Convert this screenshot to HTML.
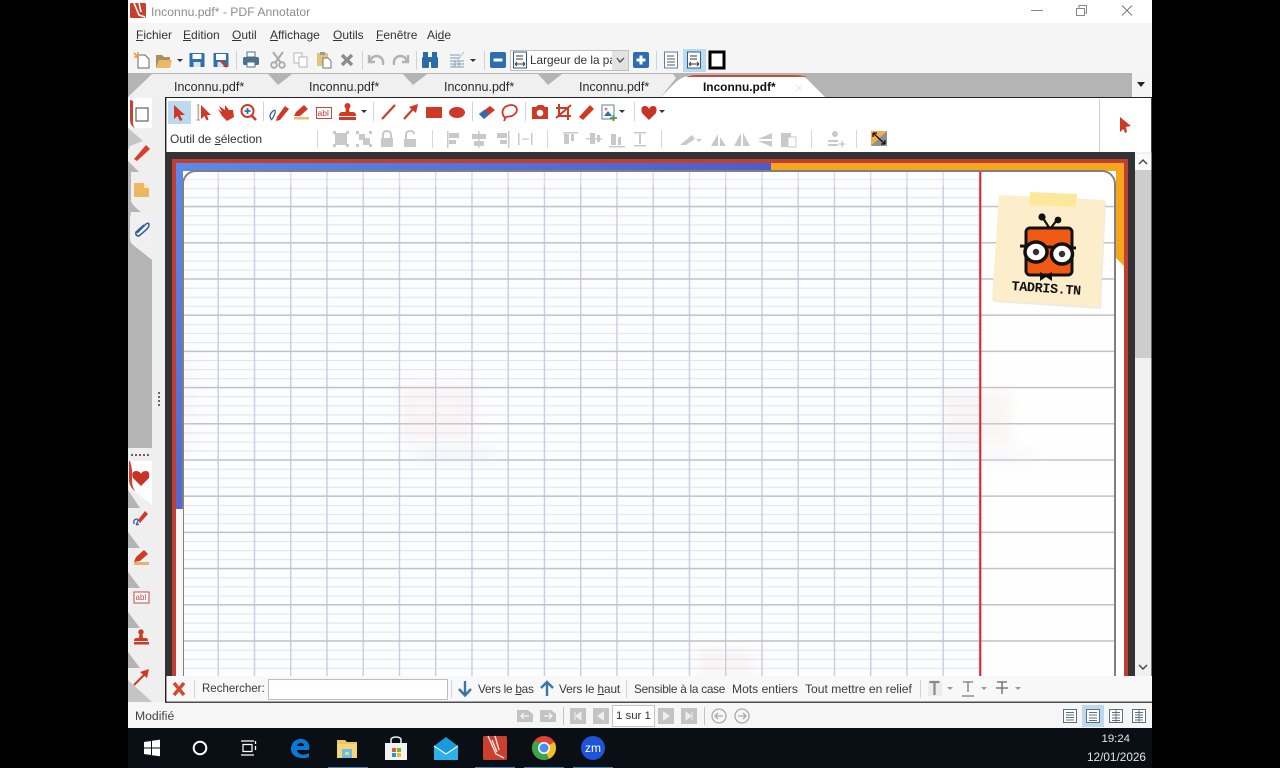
<!DOCTYPE html>
<html><head><meta charset="utf-8"><title>PDF Annotator</title>
<style>
html,body{margin:0;padding:0;background:#000;width:1280px;height:768px;overflow:hidden}
#a{position:absolute;left:0;top:0;width:1280px;height:768px;overflow:hidden;background:#000}
svg.l{position:absolute;left:0;top:0;filter:blur(.3px)}
.t{position:absolute;font:12.2px/16px "Liberation Sans",sans-serif;color:#333;white-space:nowrap}
.m{top:27px;font-size:12px}
.tb{top:79px;font-size:12.5px;color:#2a2a2a}
.f{top:681px;color:#3a3a3a;font-size:12.1px}
u{text-underline-offset:1px}
</style></head><body><div id="a">
<svg class="l" width="1280" height="768" viewBox="0 0 1280 768" xmlns="http://www.w3.org/2000/svg">
<defs>
<pattern id="minor" x="0" y="170" width="36.25" height="9.05" patternUnits="userSpaceOnUse"><rect y="0" width="36.25" height="1.1" fill="#e3e4ec"/></pattern>
<pattern id="major" x="0" y="169.6" width="36.25" height="36.2" patternUnits="userSpaceOnUse"><rect y="0" width="36.25" height="1.5" fill="#c2c2c8"/></pattern>
<pattern id="vert" x="217.5" y="0" width="36.25" height="36" patternUnits="userSpaceOnUse"><rect width="1.4" height="36" fill="#c9cbe4"/></pattern>
<linearGradient id="bt" x1="0" x2="1" y1="0" y2="0"><stop offset="0" stop-color="#5b8ae8"/><stop offset="1" stop-color="#4f5cc8"/></linearGradient>
<linearGradient id="bl" x1="0" x2="0" y1="0" y2="1"><stop offset="0" stop-color="#5b8ae8"/><stop offset="1" stop-color="#5566cc"/></linearGradient>
<filter id="b6"><feGaussianBlur stdDeviation="6"/></filter>
<clipPath id="pc"><rect x="184" y="172" width="930" height="510" rx="13"/></clipPath>
</defs>

<!-- app chrome -->
<rect x="128" y="0" width="1024" height="23" fill="#fff"/>
<rect x="128" y="23" width="1024" height="50" fill="#f5f5f5"/>
<rect x="128" y="73" width="1024" height="25" fill="#b4b4b4"/>
<rect x="152" y="98" width="13" height="604" fill="#efefef"/>
<rect x="128" y="98" width="24" height="350" fill="#b4b4b4"/>
<rect x="128" y="448" width="24" height="254" fill="#efefef"/>
<rect x="128" y="702" width="1024" height="26" fill="#f6f6f6"/>
<rect x="128" y="728" width="1024" height="40" fill="#0a0f16"/>

<!-- tabs -->
<path d="M128 97V98H1132V73H150Z" fill="#b4b4b4"/>
<path d="M128 98V97L152 74H268L278 85L292 74H403L413 85L427 74H538L548 85L562 74H673L676 78 660 98Z" fill="#f0f0f0"/>
<path d="M660 98L676 82Q684 75 694 75H796Q804 75 810 82L826 98Z" fill="#fff"/>
<path d="M686 77Q690 75 696 75H794Q802 75 807 77Z" fill="#cc4b37"/>
<rect x="1132" y="73" width="20" height="24" fill="#f4f4f4"/>
<path d="M1137 82H1145L1141 87Z" fill="#222"/>
<path d="M796 85L802 91M802 85L796 91" stroke="#e8e8e8" stroke-width="1"/>
<rect x="165" y="97" width="987" height="1.6" fill="#222"/>

<!-- tool panel -->
<rect x="165" y="98" width="987" height="54" fill="#fff"/>
<rect x="165" y="98" width="1.4" height="56" fill="#222"/>
<rect x="1099" y="99" width="1" height="53" fill="#cfcfcf"/>
<rect x="1151" y="98" width="1" height="54" fill="#444"/>
<rect x="168" y="101" width="23" height="23" fill="#bcd9f0"/>

<!-- document -->
<rect x="165" y="152" width="970" height="524" fill="#333336"/>
<rect x="172" y="159" width="956" height="530" fill="#c23f2f"/>
<rect x="176" y="163" width="948" height="520" fill="#fff"/>
<rect x="176" y="163" width="595" height="8" fill="url(#bt)"/>
<rect x="771" y="163" width="353" height="8" fill="#f5a61d"/>
<path d="M1116 170H1124V266L1116 258Z" fill="#f5a61d"/>
<rect x="176" y="163" width="7" height="346" fill="url(#bl)"/>
<rect x="182" y="170" width="934" height="520" rx="14" fill="#808081"/>
<rect x="184" y="172" width="930" height="520" rx="12" fill="#fefefe"/>
<g clip-path="url(#pc)">
<rect x="184" y="172" width="796" height="510" fill="#fcfdff"/>
<rect x="184" y="172" width="796" height="510" fill="url(#minor)"/>
<rect x="184" y="172" width="796" height="510" fill="url(#vert)"/>
<rect x="184" y="200" width="930" height="480" fill="url(#major)"/>
<rect x="980" y="172" width="134" height="30" fill="#fff"/>
<rect x="184" y="172" width="796" height="14" fill="#fff" opacity=".3"/>
<!-- watermarks -->
<g filter="url(#b6)" opacity=".2">
<rect x="402" y="385" width="72" height="55" fill="#f3d4cf"/>
<rect x="412" y="445" width="85" height="20" fill="#e5e5ea"/>
<rect x="942" y="390" width="70" height="55" fill="#ecd8d3"/>
<rect x="955" y="450" width="80" height="16" fill="#e9e9ee"/>
<rect x="698" y="650" width="55" height="30" fill="#f3d4cf"/>
<rect x="184" y="350" width="10" height="100" fill="#f2dcdc"/>
</g>
</g>
<rect x="979.3" y="172" width="2" height="504" fill="#d8262e"/>
<rect x="176" y="509" width="7" height="170" fill="#f7f7f4"/>

<!-- sticky note -->
<path d="M999 195L1105 200 1100 308 992 301Z" fill="#e4dccb" transform="translate(1 1)" opacity=".6"/>
<path d="M999 195L1105 200 1100 307 992 300Z" fill="#fdeecb"/>
<path d="M1030 192L1077 194 1076 207 1029 205Z" fill="#fbe89a"/>
<g stroke="#111" fill="none" stroke-width="2.2"><path d="M1050 229L1043 218M1050 229L1057 220"/></g>
<circle cx="1042" cy="217" r="3.6" fill="#111"/><circle cx="1058" cy="220" r="3.4" fill="#111"/>
<rect x="1026" y="228" width="46" height="47" rx="4" fill="#f05a12" stroke="#111" stroke-width="3"/>
<path d="M1020 246L1076 248" stroke="#111" stroke-width="3"/>
<ellipse cx="1036" cy="252" rx="11" ry="10" fill="#fff" stroke="#111" stroke-width="3.5"/>
<ellipse cx="1062" cy="254" rx="10.5" ry="10" fill="#fff" stroke="#111" stroke-width="3.5"/>
<circle cx="1036" cy="252" r="3.2" fill="#333"/><circle cx="1062" cy="254" r="3.2" fill="#333"/>
<path d="M1040 272L1046 275 1052 272 1052 281 1046 277 1040 281Z" fill="#111"/>

<!-- scrollbar -->
<rect x="1135" y="152" width="16.5" height="524" fill="#f0f0f0"/>
<rect x="1135" y="154" width="16.5" height="16" fill="#fafafa"/>
<rect x="1135" y="170" width="16.5" height="188" fill="#cdcdcd"/>
<path d="M1139 164L1143 160 1147 164M1139 665L1143 669 1147 665" fill="none" stroke="#444" stroke-width="1.4"/>

<!-- find bar -->
<rect x="165" y="676" width="987" height="26" fill="#f8f8f8"/>
<rect x="165" y="676" width="1.4" height="26" fill="#222"/>
<rect x="165" y="701.6" width="987" height="1.2" fill="#222"/>
<rect x="268.500" y="679.500" width="179" height="20" fill="#fff" stroke="#bcbcbc"/>
<g fill="#d4d4d4"><rect x="194" y="680" width="1" height="18"/><rect x="451" y="680" width="1" height="18"/><rect x="626" y="680" width="1" height="18"/><rect x="920" y="680" width="1" height="18"/></g>
<path d="M174 683L184 695M184 683L174 695" stroke="#d2492f" stroke-width="3.4"/>
<path d="M465 681V695M459 689L465 695.500 471 689" fill="none" stroke="#3b74ad" stroke-width="2.4"/>
<path d="M547 696V682M541 688L547 682 553 688" fill="none" stroke="#3b74ad" stroke-width="2.4"/>
<rect x="928" y="681" width="14" height="15" fill="#ececec"/>
<path d="M929.500 682H939.500M934.500 682V695" stroke="#888" stroke-width="2.2" fill="none"/>
<path d="M963 682H973M968 682V692M962 696H974" stroke="#777" stroke-width="1.3" fill="none"/>
<path d="M997 682H1007M1002 682V694M996 688H1008" stroke="#666" stroke-width="1.3" fill="none"/>
<g fill="#999"><path d="M947 687H953L950 690Z"/><path d="M981 687H987L984 690Z"/><path d="M1015 687H1021L1018 690Z"/></g>

<!-- left sidebar tabs -->
<path d="M128 128H152V172H128Z" fill="#efefef"/>
<path d="M128 128L143 141 130 146 128 150Z" fill="#c4c4c4"/>
<path d="M128 98H152V128H128Z" fill="#fff"/>
<path d="M128 161L139 172H128Z" fill="#b4b4b4"/>
<path d="M130 172H152V212L141 212Q131 205 130 198Z" fill="#efefef"/>
<path d="M128 172H131V200L128 200Z" fill="#b4b4b4"/>
<path d="M131 212H152V260L132 244Q130 242 130 238V218Z" fill="#f0f0f0"/>
<path d="M130 100Q134 100 133 104V122Q133 126 135 128 130 126 130 120Z" fill="#c9442f"/>
<rect x="136" y="108" width="12" height="13" fill="#fff" stroke="#555" stroke-width="1.100"/>
<path d="M134 159L146 145 150 149 137 161Z" fill="#d8402c"/>
<path d="M134 183H144L149 188V197H134Z" fill="#eeb660"/>
<path d="M144 183L149 188H144Z" fill="#f9e9a8"/>
<path d="M137 233L146 224Q149 222 149 225 149 227 146 230L139 236Q135 236 136 232L144 225" fill="none" stroke="#2f5f9d" stroke-width="1.500"/>
<g fill="#666"><rect x="131" y="454" width="2" height="2"/><rect x="135" y="454" width="2" height="2"/><rect x="139" y="454" width="2" height="2"/><rect x="143" y="454" width="2" height="2"/><rect x="147" y="454" width="2" height="2"/></g>
<g fill="#666"><rect x="158" y="392" width="2" height="2"/><rect x="158" y="396" width="2" height="2"/><rect x="158" y="400" width="2" height="2"/><rect x="158" y="404" width="2" height="2"/></g>
<path d="M129 461H152V505L138 494 130 490Z" fill="#fff"/>
<path d="M130 461Q133 470 132 480 132 488 136 492 130 488 129 481V461Z" fill="#c9442f"/>
<path d="M141 486L133 478Q131 471 136 471 140 471 141 474 142 471 146 471 150 471 149 478Z" fill="#c93226"/>
<g fill="#b4b4b4">
<path d="M128 490L140 508H128Z"/><path d="M128 532L140 548H128Z"/><path d="M128 572L140 588H128Z"/><path d="M128 612L140 628H128Z"/><path d="M128 652L140 668H128Z"/><path d="M128 680L152 702H128Z" fill="#c4c4c4"/>
</g>
<g transform="translate(141,517)"><path d="M-7 7Q-8 2-4 2-2 3-4 6-6 9-2 7" fill="none" stroke="#3d5fa8" stroke-width="1.300"/><path d="M-3 3L4-6 7-3-1 6Z" fill="#cf3a27"/></g>
<g transform="translate(141,557)"><rect x="-7" y="5" width="15" height="3" fill="#dcb86a"/><path d="M-7 5L-5 0 3-7 7-3-1 4Z" fill="#cf3a27"/></g>
<g transform="translate(141,597)"><rect x="-7" y="-5" width="15" height="11" fill="#fff" stroke="#c84a3a"/><text x="-5.500" y="3" font-family="Liberation Sans,sans-serif" font-size="8" fill="#b44">abl</text></g>
<g transform="translate(141,638)" fill="#cf3a27"><circle cy="-6" r="2.700"/><path d="M-1.500-4H1.500L2 0H5Q7 0 7 3H-7Q-7 0-5 0H-2Z"/><rect x="-7" y="4" width="15" height="2.500"/></g>
<g transform="translate(141,677)"><path d="M-7 8L5-4" stroke="#cf3a27" stroke-width="2"/><path d="M8-8L6 1 -1-5Z" fill="#cf3a27"/></g>

<!-- title bar icons -->
<rect x="130" y="3" width="16" height="15" rx="1.500" fill="#c8402d"/>
<path d="M134 3L139 15 145 17M139 3L141 12" stroke="#fff" stroke-width="1.600" fill="none"/>
<path d="M1031 10.500H1043" stroke="#888" stroke-width="1"/>
<path d="M1076.500 8.500H1084.500V15.500H1076.500ZM1079 8.500V5.500H1086.500V13H1084.500" fill="none" stroke="#888" stroke-width="1"/>
<path d="M1122 5.500L1132 15.500M1132 5.500L1122 15.500" stroke="#777" stroke-width="1"/>

<!-- toolbar 1 -->
<g fill="#d2d2d2"><rect x="236" y="51" width="1" height="19"/><rect x="362" y="51" width="1" height="19"/><rect x="416" y="51" width="1" height="19"/><rect x="484" y="51" width="1" height="19"/><rect x="656" y="51" width="1" height="19"/></g>
<g transform="translate(142,60)"><path d="M-4-5H3L7-1V8H-4Z" fill="#fff" stroke="#666"/><path d="M-8-7L-4-3M-4-8V-3M-8-3H-3" stroke="#e8a040" stroke-width="1.600"/></g>
<g transform="translate(164,61)"><path d="M-8-6H-2L0-4H6V-1H-4L-8 7Z" fill="#a8905f"/><path d="M-8 7L-5-1H8L6 7Z" fill="#eab866"/></g>
<path d="M177 59H183L180 62Z" fill="#333"/>
<g transform="translate(197,60)"><rect x="-7.500" y="-7" width="15" height="14" rx="1" fill="#2f6fad"/><rect x="-4.500" y="-6" width="9" height="5" fill="#fff"/><rect x="-3.500" y="2" width="7" height="5" fill="#d8e6f3"/></g>
<g transform="translate(221,60)"><rect x="-7.500" y="-7" width="15" height="14" rx="1" fill="#2f6fad"/><rect x="-5" y="-6" width="10" height="6" fill="#fff"/><rect x="-3.500" y="2" width="6" height="5" fill="#d8e6f3"/><path d="M0 1L6 7" stroke="#cf3a27" stroke-width="2.600"/></g>
<g transform="translate(251,60)"><rect x="-4" y="-8" width="8" height="5" fill="#fff" stroke="#4d7090"/><rect x="-8" y="-3" width="16" height="8" rx="1.500" fill="#4d7090"/><rect x="-4" y="2" width="8" height="5" fill="#fff" stroke="#4d7090"/></g>
<g transform="translate(278,60)" stroke="#aaa" fill="none"><path d="M-5-8L3 3M5-8L-3 3" stroke-width="2"/><circle cx="-4" cy="5" r="2.800" stroke-width="1.800"/><circle cx="4" cy="5" r="2.800" stroke-width="1.800"/></g>
<g transform="translate(301,60)" fill="#fff" stroke="#b5b5b5"><rect x="-7" y="-7" width="8" height="10"/><rect x="-2" y="-3" width="8" height="10"/></g>
<g transform="translate(324,60)"><rect x="-7" y="-7" width="11" height="13" fill="#e6c27c"/><rect x="-4" y="-8" width="5" height="3" fill="#999"/><path d="M-1-2H4L7 1V8H-1Z" fill="#fff" stroke="#777"/></g>
<path d="M342 55L352 65M352 55L342 65" stroke="#8c8c8c" stroke-width="3.400"/>
<path d="M370 62Q371 56 377 56 384 57 383 65M369 55V62H375" fill="none" stroke="#b3b3b3" stroke-width="2.400"/>
<path d="M407 62Q406 56 400 56 393 57 394 65M408 55V62H402" fill="none" stroke="#b3b3b3" stroke-width="2.400"/>
<g transform="translate(430,60)" fill="#2f6aa8"><rect x="-8" y="-3" width="7" height="11" rx="1"/><rect x="1" y="-3" width="7" height="11" rx="1"/><rect x="-7" y="-8" width="5" height="6"/><rect x="2" y="-8" width="5" height="6"/><rect x="-1.500" y="-3" width="3" height="5"/></g>
<g transform="translate(457,60)" stroke="#7d9abb" fill="none" stroke-width=".9"><path d="M-7-5H3M-7-2H3M-7 1H7M-7 4H7M-7 7H7M-2 1V7M2 1V7"/><path d="M-6 8L7-8" stroke="#bbb"/></g>
<path d="M470 59H476L473 62Z" fill="#333"/>
<rect x="490" y="52" width="16" height="16" rx="2" fill="#2e6db0"/><rect x="493.500" y="58.500" width="9" height="3" fill="#fff"/>
<rect x="510.500" y="50.500" width="118" height="20" fill="#fff" stroke="#c0c0c0"/>
<rect x="612" y="51" width="16" height="19" fill="#e2e2e2"/>
<path d="M617 58L620 62 624 58" fill="none" stroke="#555" stroke-width="1.400"/>
<g transform="translate(520,60)"><rect x="-6.500" y="-8" width="13" height="16" fill="#fff" stroke="#2a5d8f"/><path d="M-4-4H3M-4-1H3M-5 4H5M-5 4L-3 2M-5 4L-3 6M5 4L3 2M5 4L3 6" stroke="#333" stroke-width=".9" fill="none"/></g>
<rect x="633" y="52" width="16" height="16" rx="2" fill="#2e6db0"/><path d="M636.500 60H645.500M641 55.500V64.500" stroke="#fff" stroke-width="3"/>
<g transform="translate(671,60)"><rect x="-6.500" y="-8" width="13" height="16" fill="#fff" stroke="#5e7f9e"/><path d="M-4-4H3M-4-1H4M-4 2H4M-4 5H4" stroke="#555" stroke-width=".9"/></g>
<rect x="683" y="49" width="23" height="23" fill="#bcd9f0"/>
<g transform="translate(694,60)"><rect x="-6.500" y="-8" width="13" height="16" fill="#fff" stroke="#2a5d8f"/><path d="M-4-4H3M-4-1H3M-5 4H5M-5 4L-3 2M-5 4L-3 6M5 4L3 2M5 4L3 6" stroke="#333" stroke-width=".9" fill="none"/></g>
<rect x="710" y="52" width="14" height="16" fill="#fff" stroke="#000" stroke-width="3"/>

<!-- toolbar 2 -->
<g fill="#d2d2d2"><rect x="263" y="102" width="1" height="19"/><rect x="373" y="102" width="1" height="19"/><rect x="472" y="102" width="1" height="19"/><rect x="525" y="102" width="1" height="19"/><rect x="634" y="102" width="1" height="19"/></g>
<g fill="#cf3a27">
<path d="M174 105L174 119 177.500 116 180 121 182.500 120 180 115 185 115Z"/>
<path d="M201 105L201 119 204.500 116 206.500 120.500 208.500 119.500 207 115 211 115Z"/>
<path d="M218 109L222 112 219 106 225 110 225 105 229 110 233 110 234 117 227 121 222 116Z"/>
<path d="M277 117L285 106 289 109 280 120 276 121Z"/>
<path d="M294 116L296 112 304 105 308 109 300 116Z"/>
<circle cx="347.500" cy="106" r="3"/><path d="M346 107H349L349.500 112H353Q356 112 356 116H339Q339 112 342 112H345.500Z"/><rect x="339" y="117" width="17" height="3"/>
</g>
<path d="M197 105H199.500M198.200 105V120M196.500 120H200" stroke="#cc7a85" stroke-width="1.100" fill="none"/>
<circle cx="247.500" cy="111" r="6" fill="#fff" stroke="#cf3a27" stroke-width="2"/>
<path d="M252 116L256 120" stroke="#cf3a27" stroke-width="2.600"/>
<path d="M244.500 111H250.500M247.500 108V114" stroke="#2e6db0" stroke-width="1.800"/>
<path d="M272 120Q268 116 272 112 276 108 275 113 274 117 271 120" fill="none" stroke="#3d5fa8" stroke-width="1.300"/>
<rect x="294" y="117" width="15" height="2.500" fill="#e0c27c"/>
<rect x="316.500" y="107.500" width="15" height="11" fill="#fff" stroke="#c84a3a"/>
<text x="317.500" y="116" font-family="Liberation Sans,sans-serif" font-size="8.500" fill="#b33">abl</text>
<path d="M361 110H367L364 113Z" fill="#333"/>
<path d="M382 119L395 105" stroke="#cf3a27" stroke-width="2.200"/>
<path d="M404 119L414 108" stroke="#cf3a27" stroke-width="2.200"/><path d="M418 104L416 113 409 107Z" fill="#cf3a27"/>
<rect x="426" y="107" width="16" height="11" fill="#cf3a27"/>
<ellipse cx="457" cy="112.500" rx="8" ry="5.500" fill="#cf3a27"/>
<path d="M479 114L490 106 495 110 484 119Z" fill="#cf3a27"/><path d="M479 114L484 110 489 114 484 119Z" fill="#2e6db0"/>
<path d="M505 118Q500 112 505 107 512 103 516 107 519 112 512 116L506 117 504 121" fill="none" stroke="#cf3a27" stroke-width="1.800"/>
<path d="M532 107H536L538 105H543L545 107H548V119H532Z" fill="#cf3a27"/><circle cx="540" cy="113" r="3.300" fill="#fff"/>
<path d="M556 108H568V120M559 104V116H571M556 118L571 105" fill="none" stroke="#cf3a27" stroke-width="2"/>
<path d="M579 117L590 105 594 109 583 120Z" fill="#cf3a27"/>
<rect x="602" y="105" width="12" height="14" fill="#fff" stroke="#5e7f9e"/><circle cx="606" cy="109" r="1.500" fill="#d88"/><path d="M604 116L608 111 612 116Z" fill="#2e6db0"/><path d="M610 118H617M613.500 115V121" stroke="#4a9a4a" stroke-width="1.800"/>
<path d="M619 110H625L622 113Z" fill="#333"/>
<path d="M649 120L642 113Q640 106 645 106 648 106 649 109 650 106 653 106 658 106 656 113Z" fill="#c93226"/>
<path d="M659 110H665L662 113Z" fill="#333"/>
<path d="M1120 117L1120 132 1123.500 129 1125 133 1127 132 1126 127 1131 126Z" fill="#cf3a27"/>

<!-- toolbar 3 gray icons -->
<g fill="#d8d8d8"><rect x="317" y="130" width="1" height="18"/><rect x="432" y="130" width="1" height="18"/><rect x="547" y="130" width="1" height="18"/><rect x="661" y="130" width="1" height="18"/><rect x="811" y="130" width="1" height="18"/><rect x="856" y="130" width="1" height="18"/></g>
<g fill="#c9c9c9">
<rect x="335" y="133" width="12" height="12"/><rect x="333" y="131" width="3" height="3"/><rect x="346" y="131" width="3" height="3"/><rect x="333" y="144" width="3" height="3"/><rect x="346" y="144" width="3" height="3"/>
<rect x="359" y="134" width="6" height="6"/><rect x="363" y="138" width="7" height="7"/><rect x="356" y="131" width="3" height="3"/><rect x="369" y="144" width="3" height="3"/><rect x="369" y="131" width="3" height="3"/><rect x="356" y="144" width="3" height="3"/>
<rect x="381" y="138" width="12" height="9"/><rect x="404" y="139" width="12" height="8"/>
<rect x="449" y="133" width="10" height="5"/><rect x="449" y="140" width="7" height="4"/><rect x="447" y="131" width="1.500" height="17"/>
<rect x="472" y="134" width="14" height="5"/><rect x="474" y="141" width="10" height="5"/><rect x="478" y="131" width="1.500" height="17"/>
<rect x="497" y="133" width="10" height="5"/><rect x="500" y="140" width="7" height="4"/><rect x="508" y="131" width="1.500" height="17"/>
<rect x="518" y="133" width="1.500" height="12"/><rect x="531" y="133" width="1.500" height="12"/><rect x="522" y="138.500" width="7" height="1.200"/>
<rect x="563" y="132" width="15" height="1.500"/><rect x="564" y="134" width="5" height="10"/><rect x="571" y="134" width="3" height="7"/>
<rect x="586" y="138" width="16" height="1.500"/><rect x="590" y="133" width="5" height="11"/><rect x="597" y="135" width="3" height="7"/>
<rect x="609" y="146" width="16" height="1.500"/><rect x="611" y="134" width="5" height="11"/><rect x="618" y="137" width="3" height="8"/>
<rect x="634" y="132" width="12" height="1.500"/><rect x="634" y="145" width="12" height="1.500"/><rect x="639" y="134" width="2" height="10"/>
<path d="M680 145L692 135 695 139 686 145Z"/><path d="M696 139H702L699 142Z"/>
<path d="M711 146L718 134V146ZM720 137V146H726Z"/>
<path d="M734 146L741 133V146ZM743 133L750 146H743Z"/>
<path d="M772 133V139L758 139ZM772 141V147L758 141Z"/>
<rect x="781" y="133" width="10" height="14"/>
<circle cx="835" cy="134" r="3"/><rect x="828" y="140" width="10" height="2"/><rect x="828" y="144" width="10" height="2"/>
</g>
<path d="M383 138V135Q383 131 387 131 391 131 391 135V138" fill="none" stroke="#c9c9c9" stroke-width="2"/>
<path d="M406 139V135Q406 131 410 131 414 131 414 134" fill="none" stroke="#c9c9c9" stroke-width="2"/>
<rect x="788" y="137" width="8" height="10" fill="#fff" stroke="#c9c9c9"/>
<path d="M839 144H845M842 141V147" stroke="#c9c9c9" stroke-width="1.500"/>
<rect x="871" y="131" width="16" height="15" fill="#8f8f8f"/><path d="M871 131H887L871 146Z" fill="#eeb04e"/>
<path d="M873 133L885 144M873 133V137M873 133H877M885 144V140M885 144H881" fill="none" stroke="#111" stroke-width="1.300"/>

<!-- status bar -->
<g fill="#c3c3c3">
<path d="M517 710H528L533 714V722H517Z"/><path d="M540 710H551L556 714V722H540Z"/>
<rect x="570" y="708" width="16" height="16"/><rect x="593" y="708" width="16" height="16"/>
<rect x="658" y="708" width="16" height="16"/><rect x="681" y="708" width="16" height="16"/>
<rect x="563" y="707" width="1" height="18"/><rect x="704" y="707" width="1" height="18"/>
</g>
<path d="M521 716H529M524 713L521 716 524 719M544 716H552M549 713L552 716 549 719" fill="none" stroke="#f6f6f6" stroke-width="1.200"/>
<path d="M581 712V720L576 716ZM575 712V720" fill="#eee" stroke="#eee"/>
<path d="M604 711V721L597 716Z" fill="#eee"/>
<path d="M663 711V721L670 716Z" fill="#eee"/>
<path d="M686 712V720L691 716ZM692 712V720" fill="#eee" stroke="#eee"/>
<rect x="612.500" y="705.500" width="42" height="21" fill="#fff" stroke="#c4c4c4"/>
<g fill="none" stroke="#aaa" stroke-width="1.300"><circle cx="719" cy="716" r="7"/><circle cx="742" cy="716" r="7"/><path d="M723 716H715M718 713L715 716 718 719M738 716H746M743 713L746 716 743 719"/></g>
<rect x="1082" y="705" width="22" height="22" fill="#bcd9f0"/>
<g fill="#fff" stroke="#5c6f80"><rect x="1063.500" y="709.500" width="13" height="13"/><rect x="1086.500" y="709.500" width="13" height="13"/><rect x="1109.500" y="709.500" width="13" height="13"/><rect x="1132.500" y="709.500" width="13" height="13"/></g>
<path d="M1066 712.500H1074M1066 715H1074M1066 717.500H1074M1066 720H1074M1089 712.500H1097M1089 715H1097M1089 718H1097M1089 720.500H1097M1112 712.500H1120M1112 715H1120M1112 718H1120M1112 720.500H1120M1116 709.500V722.500M1139 709.500V722.500M1135 712.500H1143M1135 715H1143M1135 717.500H1143M1135 720H1143" stroke="#5c6f80" stroke-width=".9"/>

<!-- taskbar -->
<g fill="#fff"><path d="M144 742L151 741V747.500H144ZM152 740.800L160 739.600V747.500H152ZM144 748.500H151V755L144 754ZM152 748.500H160V756.300L152 755.200Z"/></g>
<circle cx="200" cy="748" r="6.300" fill="none" stroke="#fff" stroke-width="2"/>
<path d="M241 741H254M241 755H254M243 744.500H252V751.500H243Z" fill="none" stroke="#fff" stroke-width="1.200"/><path d="M255.500 741V744M255.500 746V750" stroke="#fff" stroke-width="1.300"/>
<path d="M291 749C291 741 298 738 303 739 309 741 310 746 309 750H297C298 755 304 756 309 753V757C301 760 291 757 291 749ZM297 746H304C304 742 298 742 297 746Z" fill="#0a78d4"/>
<path d="M337 740H345L347 742H357V758H337Z" fill="#eec75c"/><rect x="337" y="744" width="20" height="14" fill="#f3d67c"/><rect x="342" y="749" width="10" height="9" fill="#6bbfe2"/><rect x="345" y="752" width="4" height="3" fill="#f3d67c"/>
<path d="M385 743H407V760H385Z" fill="#f2f2f2"/><path d="M391 743V740Q391 737 396 737 401 737 401 740V743" fill="none" stroke="#f2f2f2" stroke-width="1.500"/>
<rect x="392" y="748" width="4" height="4" fill="#e25a33"/><rect x="397" y="748" width="4" height="4" fill="#7bb33a"/><rect x="392" y="753" width="4" height="4" fill="#1d9ae0"/><rect x="397" y="753" width="4" height="4" fill="#f3b81d"/>
<path d="M434 746L446 737 458 746V760H434Z" fill="#1a9ad8"/><path d="M434 746L446 754 458 746V760H434Z" fill="#2eb1e8"/><path d="M434 746L446 754 458 746" fill="none" stroke="#e8f6fd" stroke-width="1.200"/>
<rect x="483" y="736" width="24" height="24" rx="1.500" fill="#cc3f2c"/><path d="M488 736L496 754 504 758M495 736L499 750M492 740L497 752" stroke="#f6e4e0" stroke-width="1.400" fill="none"/>
<circle cx="544" cy="748" r="12" fill="#e34234"/><path d="M544 748L533.600 754A12 12 0 0 0 549 758.900Z" fill="#3ca54a"/><path d="M544 748L549 758.900A12 12 0 0 0 554.400 742Z" fill="#f4c01f"/><path d="M544 748L533.600 754A12 12 0 0 1 533.600 742L544 742Z" fill="#3ca54a"/>
<circle cx="544" cy="748" r="6" fill="#fff"/><circle cx="544" cy="748" r="4.500" fill="#4d8cf0"/>
<circle cx="593" cy="748" r="12" fill="#1d55d8"/>
<text x="593" y="752" text-anchor="middle" font-family="Liberation Sans,sans-serif" font-size="12" fill="#fff">zm</text>
<g fill="#5b9bd0" opacity=".8"><rect x="328" y="767" width="40" height="1"/><rect x="475" y="767" width="40" height="1"/><rect x="524" y="767" width="40" height="1"/><rect x="573" y="767" width="40" height="1"/></g>
</svg>

<div class="t" style="left:151px;top:4px;color:#8c8c8c;font-size:12.2px">Inconnu.pdf* - PDF Annotator</div>
<div class="t m" style="left:136px"><u>F</u>ichier</div>
<div class="t m" style="left:183px"><u>E</u>dition</div>
<div class="t m" style="left:232px"><u>O</u>util</div>
<div class="t m" style="left:270px"><u>A</u>ffichage</div>
<div class="t m" style="left:333px"><u>O</u>utils</div>
<div class="t m" style="left:376px"><u>F</u>enêtre</div>
<div class="t m" style="left:427px">Ai<u>d</u>e</div>
<div class="t" style="left:530px;top:52px;width:82px;overflow:hidden;font-size:11.8px">Largeur de la page</div>
<div class="t tb" style="left:174px">Inconnu.pdf*</div>
<div class="t tb" style="left:309px">Inconnu.pdf*</div>
<div class="t tb" style="left:444px">Inconnu.pdf*</div>
<div class="t tb" style="left:579px">Inconnu.pdf*</div>
<div class="t tb" style="left:703px;font-weight:bold;color:#111;font-size:11.9px">Inconnu.pdf*</div>
<div class="t" style="left:170px;top:131px;font-size:12px">Outil de <u>s</u>élection</div>
<div class="t" style="left:1012px;top:280px;font:bold 13.5px/16px 'Liberation Mono','Liberation Sans',sans-serif;color:#111;transform:rotate(4deg);transform-origin:left top;letter-spacing:-.4px">TADRIS.TN</div>
<div class="t f" style="left:202px;font-size:11.5px">Rechercher:</div>
<div class="t f" style="left:478px;font-size:11.8px;letter-spacing:-.25px">Vers le <u>b</u>as</div>
<div class="t f" style="left:559px;font-size:11.8px;letter-spacing:-.1px">Vers le <u>h</u>aut</div>
<div class="t f" style="left:634px;font-size:11.8px;letter-spacing:-.26px">Sensible à la case</div>
<div class="t f" style="left:732px">Mots entiers</div>
<div class="t f" style="left:805px">Tout mettre en relief</div>
<div class="t" style="left:135px;top:708px;color:#444;font-size:12.2px">Modifié</div>
<div class="t" style="left:616px;top:708px;font-size:11.4px">1 sur 1</div>
<div class="t" style="left:1060px;top:731px;width:84px;text-align:right;color:#e4e4e4;font-size:11.4px;padding-right:14px;box-sizing:border-box">19:24</div>
<div class="t" style="left:1060px;top:749px;width:86px;text-align:right;color:#e4e4e4;font-size:11.8px">12/01/2026</div>
</div></body></html>
